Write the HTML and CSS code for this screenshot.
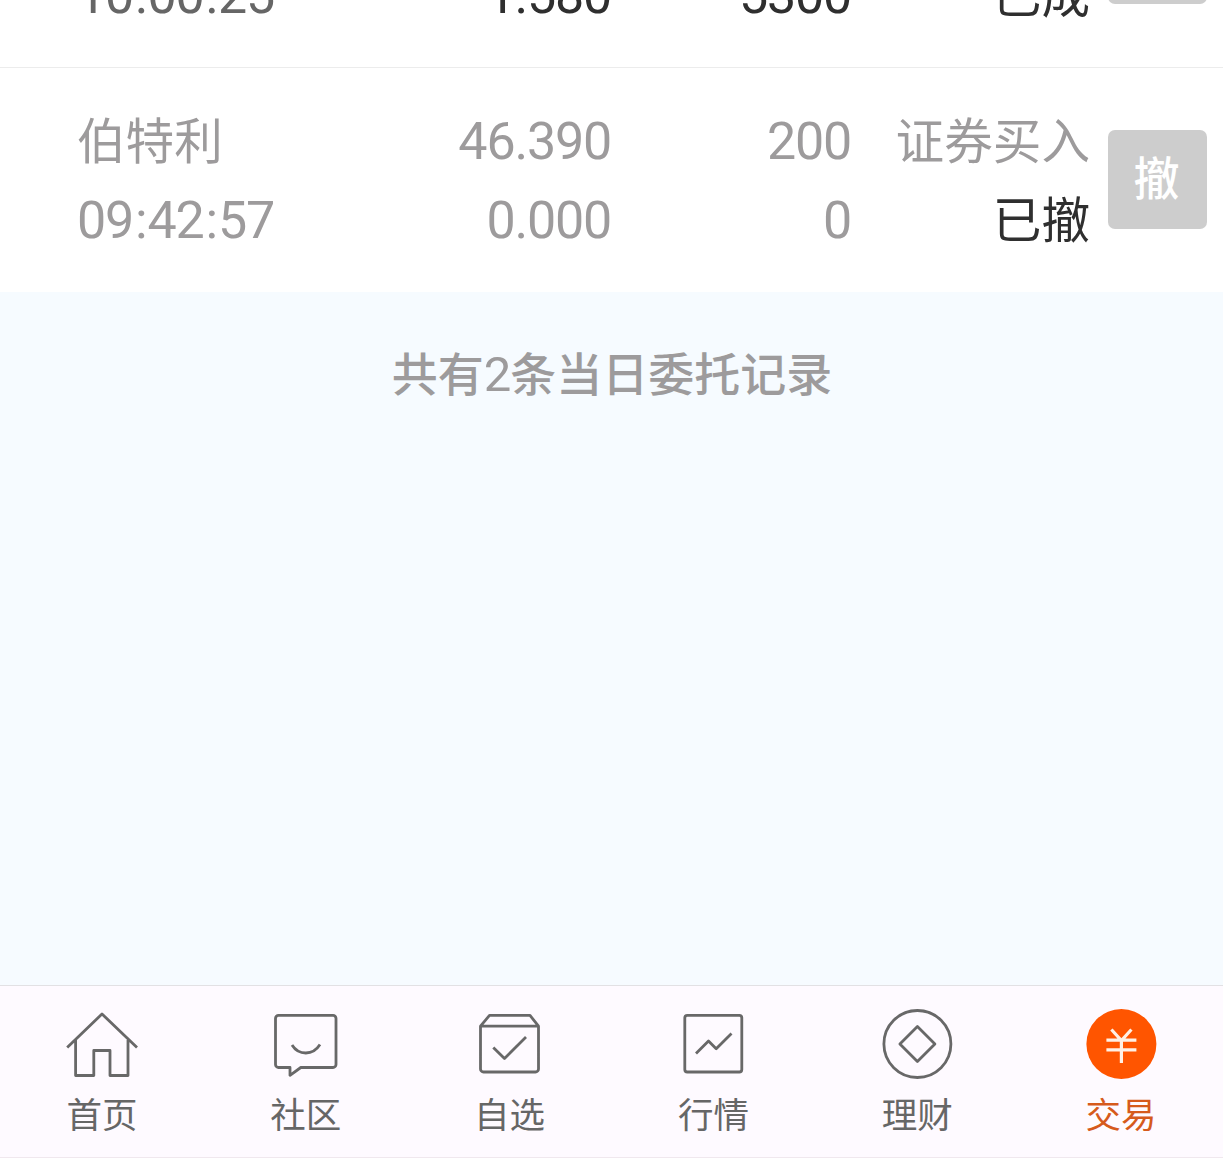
FILE: index.html
```html
<!DOCTYPE html>
<html lang="zh-CN">
<head>
<meta charset="UTF-8">
<title>当日委托</title>
<link rel="stylesheet" href="styles.css">
</head>
<body>
<div class="app">
  <main class="orders">
    <section class="list">
      <div class="row">
        <div class="cells">
          <span class="cell time">10<i>:</i>00<i>:</i>25</span>
          <span class="cell num">1.580</span>
          <span class="cell num">5300</span>
          <span class="cell status">已成</span>
        </div>
        <div class="cancel"></div>
      </div>
      <div class="row cancelled">
        <div class="cells">
          <span class="cell name">伯特利</span>
          <span class="cell num">46.390</span>
          <span class="cell num">200</span>
          <span class="cell side">证券买入</span>
          <span class="cell time">09<i>:</i>42<i>:</i>57</span>
          <span class="cell num">0.000</span>
          <span class="cell num">0</span>
          <span class="cell status">已撤</span>
        </div>
        <div class="cancel">撤</div>
      </div>
    </section>
    <p class="summary">共有<b>2</b>条当日委托记录</p>
  </main>
  <nav class="tabs">
    <a class="tab">
      <svg viewBox="0 0 80 72"><path d="M5.2 39.5 40 6 75 39.5M13.6 32V67.5H31.8V42.5H48V67.5H66V32"/></svg>
      <span>首页</span>
    </a>
    <a class="tab">
      <svg viewBox="0 0 80 72"><path d="M12.5 7.4H67A3 3 0 0 1 70 10.4V56.5A3 3 0 0 1 67 59.5H34.8L24 67.3V59.5H12.5A3 3 0 0 1 9.5 56.5V10.4A3 3 0 0 1 12.5 7.4Z"/><path d="M26 37Q31 45 39.8 45T54 36.5"/></svg>
      <span>社区</span>
    </a>
    <a class="tab">
      <svg viewBox="0 0 80 72"><path d="M10.5 18.2 19.5 7.4H60L68.5 18.2V61A3 3 0 0 1 65.5 64H13.5A3 3 0 0 1 10.5 61ZM10.5 18.2H68.5M23.3 39.5 34.5 50.5 56 29"/></svg>
      <span>自选</span>
    </a>
    <a class="tab">
      <svg viewBox="0 0 80 72"><rect x="11.8" y="7.4" width="57" height="56.6" rx="2.5"/><path d="M23 45.5 35.5 33 43.2 40.7 58.5 25.5"/></svg>
      <span>行情</span>
    </a>
    <a class="tab">
      <svg viewBox="0 0 80 72"><circle cx="40.4" cy="36" r="33.5"/><path d="M40.4 18.5 57.9 36 40.4 53.5 22.9 36Z"/></svg>
      <span>理财</span>
    </a>
    <a class="tab active">
      <svg viewBox="0 0 80 72"><circle cx="40.4" cy="36" r="35"/><path d="M30.4 21.5 40.4 32.5 50.4 21.5M25.4 32.2H55.4M25.4 41.8H55.4M40.4 32V55"/></svg>
      <span>交易</span>
    </a>
  </nav>
</div>
</body>
</html>
```
FILE: styles.css
```css
* { box-sizing: border-box; }

body {
  margin: 0;
  font-family: Roboto, "Noto Sans CJK SC", sans-serif;
  background: #f6fbff;
}

.app {
  display: flex;
  flex-direction: column;
  height: 1158px;
  overflow: hidden;
}

.orders { flex: 1; }

.list {
  display: flex;
  flex-direction: column;
  justify-content: flex-end;
  height: 292px;
  overflow: hidden;
  background: #fff;
}

.row {
  display: flex;
  flex: none;
  align-items: center;
  gap: 18px;
  height: 224px;
  padding: 0 16px 2px 77px;
}

.row:first-child {
  height: 225px;
  border-bottom: 1px solid #ececec;
}

.cells {
  display: grid;
  grid-template-columns: 273px 261px 240px 1fr;
  grid-template-rows: 79px 79px;
  flex: 1;
  color: #2f2f2f;
}

.row:first-child .cell { grid-row: 2; }

.cell {
  padding-top: 3px;
  font-size: 48.6px;
  line-height: 79px;
  white-space: nowrap;
}

.num, .time {
  padding-top: 2px;
  font-size: 52px;
  letter-spacing: -1.2px;
}

.time { color: #666; }
.time i { font-style: normal; padding: 0 1px 0 2px; }
.num, .side, .status { text-align: right; }

.cancelled .cell { color: #9d9b9c; }
.cancelled .status { color: #2f2f2f; }

.cancel {
  flex: none;
  width: 99px;
  height: 99px;
  padding-right: 2px;
  border-radius: 7px;
  background: #cdcdcd;
  color: #fff;
  font-size: 46px;
  font-weight: 500;
  line-height: 99px;
  text-align: center;
}

.summary {
  margin: 48px 0 0;
  padding-left: 1px;
  color: #9d9b9c;
  font-size: 46px;
  font-weight: 500;
  line-height: 70px;
  text-align: center;
}

.summary b { font-size: 49px; font-weight: 400; letter-spacing: -1px; }

.tabs {
  display: grid;
  grid-template-columns: repeat(6, 1fr);
  height: 173px;
  border-top: 1px solid #e2e1e4;
  border-bottom: 1px solid #f0e8ee;
  background: #fefaff;
}

.tab {
  display: flex;
  flex-direction: column;
  align-items: center;
  padding-top: 22px;
  color: #666;
  font-size: 35.5px;
  line-height: 50px;
}

.tab svg {
  width: 80px;
  height: 72px;
  margin-bottom: 11px;
  fill: none;
  stroke: #686868;
  stroke-width: 2.8;
  stroke-linejoin: round;
}

.active { color: #d65a1c; }
.active circle { fill: #ff5500; stroke: none; }
.active path { stroke: #fff0e4; stroke-width: 3.2; stroke-linejoin: miter; }
```
